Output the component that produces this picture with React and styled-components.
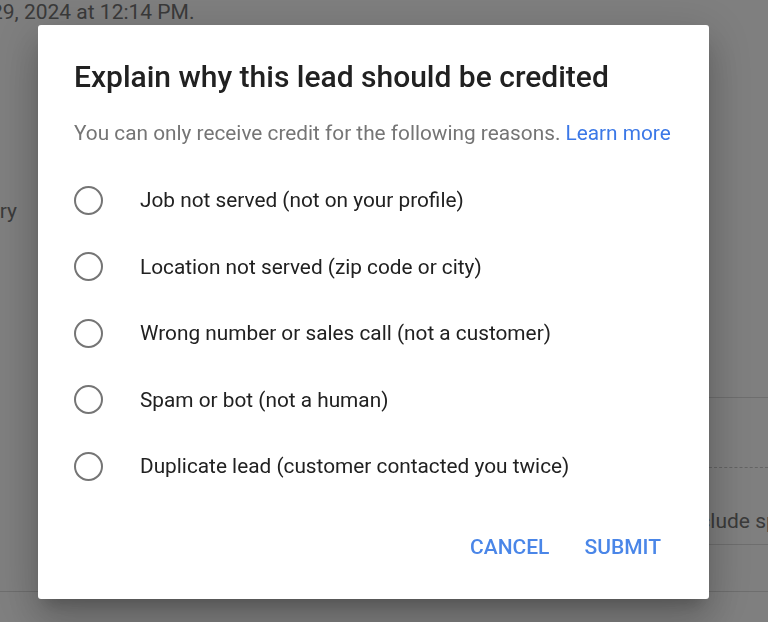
import React, { useState } from 'react';
import styled, { createGlobalStyle } from 'styled-components';

const reasons = [
  "Job not served (not on your profile)",
  "Location not served (zip code or city)",
  "Wrong number or sales call (not a customer)",
  "Spam or bot (not a human)",
  "Duplicate lead (customer contacted you twice)",
];

function App() {
  const [picked, setPicked] = useState(null);

  return (
    <>
      <GlobalStyle />
      <Page>
        <DateLine>29, 2024 at 12:14 PM.</DateLine>
        <SummaryRow>
          <SummaryLabel>Summary</SummaryLabel>
        </SummaryRow>
        <SidePanel>
          <PanelRow dashed />
          <PanelRow>
            <PanelText>Include spam calls in reports</PanelText>
          </PanelRow>
        </SidePanel>
        <FooterLine />
      </Page>

      <Overlay>
        <Dialog role="dialog">
          <Title>Explain why this lead should be credited</Title>
          <Subtitle>
            You can only receive credit for the following reasons. <LearnMore href="#">Learn more</LearnMore>
          </Subtitle>
          <ReasonList>
            {reasons.map((r, i) => (
              <Reason key={r}>
                <Radio type="radio" name="reason" checked={picked === i} onChange={() => setPicked(i)} />
                <ReasonText>{r}</ReasonText>
              </Reason>
            ))}
          </ReasonList>
          <Actions>
            <ActionButton>Cancel</ActionButton>
            <ActionButton>Submit</ActionButton>
          </Actions>
        </Dialog>
      </Overlay>
    </>
  );
}

export default App;

const GlobalStyle = createGlobalStyle`
body {
  margin: 0;
  background: #ffffff;
  font-family: Roboto, "Noto Sans", sans-serif;
}
`;

const Page = styled.div`
height: 622px;
overflow: hidden;
color: #757575;
font-size: 21px;
`;

const DateLine = styled.div`
line-height: 24px;
margin-left: -9px;
white-space: nowrap;
`;

const SummaryRow = styled.div`
display: flex;
margin-top: 175px;
line-height: 24px;
`;

const SummaryLabel = styled.div`
width: 120px;
margin-left: -103px;
text-align: right;
`;

const SidePanel = styled.div`
margin-top: 174px;
margin-left: 658px;
border-top: 1px solid #dcdcdc;
border-bottom: 1px solid #dcdcdc;
`;

const PanelRow = styled.div`
height: ${p => (p.dashed ? '70px' : '76px')};
border-bottom: ${p => (p.dashed ? '1px dashed #c8c8c8' : 'none')};
box-sizing: border-box;
padding: 41px 0 0 24px;
`;

const PanelText = styled.div`
line-height: 24px;
white-space: nowrap;
`;

const FooterLine = styled.div`
margin-top: 46px;
border-top: 1px solid #dcdcdc;
`;

const Overlay = styled.div`
position: fixed;
inset: 0;
background: rgba(0, 0, 0, 0.5);
display: flex;
align-items: flex-start;
padding: 25px 0 0 38px;
`;

const Dialog = styled.div`
width: 671px;
box-sizing: border-box;
padding: 36px 36px 34px 36px;
background: #ffffff;
border-radius: 3px;
box-shadow: 0 24px 38px 3px rgba(0, 0, 0, 0.14), 0 9px 46px 8px rgba(0, 0, 0, 0.12), 0 11px 15px -7px rgba(0, 0, 0, 0.2);
display: flex;
flex-direction: column;
`;

const Title = styled.h2`
margin: 0;
font-size: 30px;
line-height: 32px;
font-weight: 500;
color: #212121;
`;

const Subtitle = styled.p`
margin: 26px 0 0;
font-size: 20.8px;
line-height: 28px;
color: #757575;
white-space: nowrap;
`;

const LearnMore = styled.a`
color: #3b78e7;
text-decoration: none;
`;

const ReasonList = styled.div`
margin-top: 20px;
display: flex;
flex-direction: column;
`;

const Reason = styled.label`
height: 66.5px;
display: flex;
align-items: center;
gap: 37px;
cursor: pointer;
`;

const Radio = styled.input`
appearance: none;
margin: 0;
width: 29px;
height: 29px;
box-sizing: border-box;
border: 2.5px solid #757575;
border-radius: 50%;
flex-shrink: 0;
&:checked {
  border-color: #4a86e8;
  background: radial-gradient(circle, #4a86e8 0 6px, transparent 7px);
}
`;

const ReasonText = styled.span`
font-size: 20.8px;
color: #212121;
`;

const Actions = styled.div`
margin-top: 29.5px;
display: flex;
justify-content: flex-end;
gap: 11px;
`;

const ActionButton = styled.button`
height: 36px;
padding: 0 12px;
border: none;
background: transparent;
font-family: Roboto, sans-serif;
font-size: 21px;
font-weight: 500;
text-transform: uppercase;
color: #4a86e8;
cursor: pointer;
`;
